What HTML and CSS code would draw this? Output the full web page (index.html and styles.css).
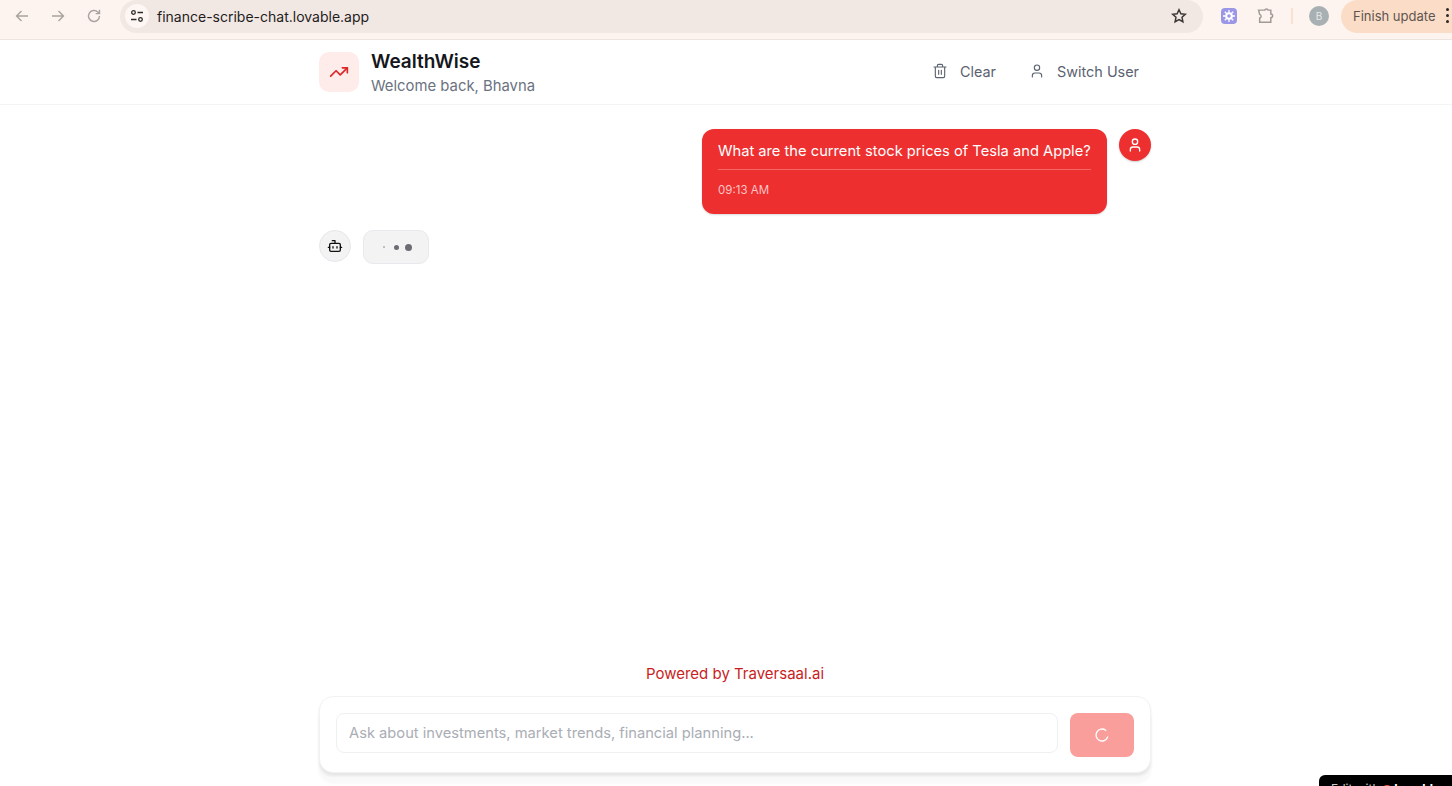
FILE: index.html
```html
<!DOCTYPE html>
<html lang="en">
<head>
<meta charset="utf-8">
<title>WealthWise</title>
<link rel="stylesheet" href="styles.css">
</head>
<body>
<div class="browser">
  <div class="nav-icons">
    <svg class="nav-icon" viewBox="0 0 16 16"><path d="M14 8H2.500M7.500 3 2.500 8l5 5"/></svg>
    <svg class="nav-icon" viewBox="0 0 16 16"><path d="M2 8h11.500M8.500 3l5 5-5 5"/></svg>
    <svg class="nav-icon" viewBox="0 0 16 16"><path d="M13.500 8a5.500 5.500 0 1 1-1.700-4L13.500 5.600M13.500 1.800v3.800H9.700"/></svg>
  </div>
  <div class="omnibox">
    <span class="site-chip">
      <svg viewBox="0 0 14 14" class="tune"><circle cx="3.500" cy="3.500" r="1.800"/><path d="M7.500 3.500H13M1 10.500h5.500"/><circle cx="10.500" cy="10.500" r="1.800"/></svg>
    </span>
    <span class="url">finance-scribe-chat.lovable.app</span>
    <svg class="star" viewBox="0 0 16 16"><path d="m8 1.800 1.900 4 4.400.5-3.300 3 .9 4.400L8 11.500l-3.900 2.200.9-4.400-3.300-3 4.400-.5z"/></svg>
  </div>
  <div class="ext-icons">
    <span class="ext-purple"><svg viewBox="0 0 16 16"><circle cx="8" cy="8" r="3.800" fill="#fff"/><path d="M8 2v12M2 8h12M3.800 3.800l8.400 8.400M12.200 3.800l-8.400 8.400" stroke="#fff" stroke-width="1.300"/><circle cx="8" cy="8" r="1.800" fill="#9b96e6"/></svg></span>
    <svg class="puzzle" viewBox="0 0 16 16"><path d="M1.500 2h5.800a1.700 1.700 0 0 1 3.200 0H13v3.700a1.700 1.700 0 0 1 0 3.400v4.400H2.500V9.500a1.800 1.800 0 0 0 0-3.500z"/></svg>
    <span class="divider"></span>
    <span class="profile">B</span>
  </div>
  <div class="update">Finish update</div>
  <span class="kebab"><i></i><i></i><i></i></span>
</div>

<div class="app">
  <header class="app-header">
    <div class="header-inner">
      <div class="brand">
        <span class="brand-icon">
          <svg viewBox="0 0 24 24"><path d="m22 7-8.500 8.500-5-5L2 17"/><path d="M16 7h6v6"/></svg>
        </span>
        <div class="brand-text">
          <h1>WealthWise</h1>
          <p>Welcome back, Bhavna</p>
        </div>
      </div>
      <div class="actions">
        <button class="action">
          <svg viewBox="0 0 24 24"><path d="M3 6h18M19 6v14a2 2 0 0 1-2 2H7a2 2 0 0 1-2-2V6M8 6V4a2 2 0 0 1 2-2h4a2 2 0 0 1 2 2v2M10 11v6M14 11v6"/></svg>
          Clear
        </button>
        <button class="action">
          <svg viewBox="0 0 24 24"><path d="M19 21v-2a4 4 0 0 0-4-4H9a4 4 0 0 0-4 4v2"/><circle cx="12" cy="7" r="4"/></svg>
          Switch User
        </button>
      </div>
    </div>
  </header>

  <main class="chat">
    <div class="msg-user">
      <div class="bubble">
        <p class="bubble-text">What are the current stock prices of Tesla and Apple?</p>
        <p class="bubble-time">09:13 AM</p>
      </div>
      <span class="avatar-user">
        <svg viewBox="0 0 24 24"><path d="M19 21v-2a4 4 0 0 0-4-4H9a4 4 0 0 0-4 4v2"/><circle cx="12" cy="7" r="4"/></svg>
      </span>
    </div>
    <div class="msg-bot">
      <span class="avatar-bot">
        <svg viewBox="0 0 24 24"><path d="M12 8V4H8"/><rect x="4" y="8" width="16" height="12" rx="2"/><path d="M2 14h2M20 14h2M15 13v2M9 13v2"/></svg>
      </span>
      <div class="typing"><i class="dot-a"></i><i class="dot-b"></i><i class="dot-c"></i></div>
    </div>
  </main>

  <footer class="composer-wrap">
    <p class="powered">Powered by Traversaal.ai</p>
    <div class="composer">
      <div class="input">Ask about investments, market trends, financial planning...</div>
      <button class="send">
        <svg viewBox="0 0 24 24"><path d="M21 12a9 9 0 1 1-6.200-8.600"/></svg>
      </button>
    </div>
  </footer>
</div>
<div class="badge">Edit with <span class="heart"></span> <b>Lovable</b></div>
</body>
</html>
```

FILE: styles.css
```css
* { box-sizing: border-box; }
html, body { margin: 0; height: 100%; overflow: hidden; }
body {
  width: 1452px;
  height: 786px;
  display: flex;
  flex-direction: column;
  background: #fff;
  font-family: "Inter", "Liberation Sans", sans-serif;
  color: #16181d;
  position: relative;
}
p, h1 { margin: 0; }
button { font: inherit; border: 0; background: none; padding: 0; }

/* Browser chrome */
.browser {
  height: 40px;
  flex: none;
  display: flex;
  align-items: center;
  background: #fdf4f0;
  border-bottom: 1px solid #ece4df;
  padding: 0 0 7px 14px;
}
.nav-icons { display: flex; gap: 20px; width: 106px; }
.nav-icon { width: 16px; height: 16px; fill: none; stroke: #a8a3a0; stroke-width: 1.400; }
.omnibox {
  width: 1083px;
  height: 33px;
  border-radius: 17px;
  background: #f1e7e3;
  display: flex;
  align-items: center;
  padding: 0 16px 0 5px;
}
.site-chip {
  width: 24px; height: 24px; border-radius: 50%;
  background: #fdf6f3;
  display: flex; align-items: center; justify-content: center;
}
.tune { width: 14px; height: 14px; fill: none; stroke: #2c2a29; stroke-width: 1.300; }
.url { margin-left: 8px; font-size: 14px; color: #1f1d1c; flex: 1; }
.star { width: 16px; height: 16px; fill: none; stroke: #3a3735; stroke-width: 1.500; }
.ext-icons { display: flex; align-items: center; margin-left: 18px; }
.ext-purple { width: 16px; height: 16px; border-radius: 4px; background: #9b96e6; display: block; }
.ext-purple svg { display: block; width: 16px; height: 16px; }
.puzzle { width: 17px; height: 17px; margin-left: 20px; fill: none; stroke: #a09a97; stroke-width: 1.400; }
.divider { width: 2px; height: 16px; background: #f8e2d3; margin-left: 17px; }
.profile {
  width: 20px; height: 20px; border-radius: 50%;
  background: #a9b0b3; color: #e6e9ea;
  font-size: 10px; display: flex; align-items: center; justify-content: center;
  margin-left: 16px;
}
.update {
  margin-left: 12px;
  width: 111px;
  height: 33px;
  flex: none;
  border-radius: 17px 0 0 17px;
  background: #fbdcc6;
  color: #5d5551;
  font-size: 13px;
  display: flex; align-items: center;
  padding-left: 12px;
  white-space: nowrap;
}
.kebab {
  position: absolute; left: 1446px; top: 8px;
  display: flex; flex-direction: column; gap: 3px;
}
.kebab i { width: 3px; height: 3px; border-radius: 50%; background: #2b2725; display: block; }

/* App: the page column sits 9px right of centre, as in the reference */
.app { flex: 1; min-height: 0; display: flex; flex-direction: column; padding-left: 18px; }
.app-header { height: 65px; flex: none; border-bottom: 1px solid #f3f4f6; margin-left: -18px; padding-left: 18px; }
.header-inner {
  width: 832px; height: 64px; margin: 0 auto;
  display: flex; align-items: center; justify-content: space-between;
  padding-right: 12px;
}
.brand { display: flex; align-items: center; gap: 12px; }
.brand-icon {
  width: 40px; height: 40px; border-radius: 10px;
  background: #fdecea;
  display: flex; align-items: center; justify-content: center;
}
.brand-icon svg { width: 20px; height: 20px; fill: none; stroke: #dc2626; stroke-width: 2; stroke-linecap: round; stroke-linejoin: round; }
.brand-text { display: flex; flex-direction: column; padding-top: 3px; }
.brand-text h1 { font-size: 19px; font-weight: 600; line-height: 24px; color: #15171c; }
.brand-text p { font-size: 14.850px; line-height: 24px; color: #6b7280; }
.actions { display: flex; gap: 33px; transform: translateY(-1px); }
.action { display: flex; align-items: center; gap: 12px; font-size: 14.400px; color: #5b6270; }
.action svg { width: 16px; height: 16px; fill: none; stroke: #5b6270; stroke-width: 1.700; stroke-linecap: round; stroke-linejoin: round; }

.chat { flex: 1; min-height: 0; width: 832px; margin: 0 auto; padding-top: 24px; display: flex; flex-direction: column; gap: 16px; }
.msg-user { display: flex; justify-content: flex-end; gap: 12px; align-items: flex-start; }
.bubble {
  width: 405px; height: 85px;
  border-radius: 12px;
  background: #ee2f2f;
  color: #fff;
  padding: 12px 16px 0;
  box-shadow: 0 1px 2px rgba(0,0,0,.15);
}
.bubble-text {
  font-size: 14.700px; line-height: 20px;
  padding-bottom: 8px;
  border-bottom: 1px solid #f76666;
  white-space: nowrap;
}
.bubble-time { font-size: 11.500px; line-height: 16px; margin-top: 12px; color: #fbc4c4; }
.avatar-user {
  width: 32px; height: 32px; border-radius: 50%;
  background: #ee2f2f;
  display: flex; align-items: center; justify-content: center;
  box-shadow: 0 1px 2px rgba(0,0,0,.2);
}
.avatar-user svg { width: 16px; height: 16px; fill: none; stroke: #fff; stroke-width: 2; stroke-linecap: round; stroke-linejoin: round; }
.msg-bot { display: flex; gap: 12px; align-items: flex-start; }
.avatar-bot {
  width: 32px; height: 32px; border-radius: 50%;
  background: #f3f3f4; border: 1px solid #e5e7eb;
  display: flex; align-items: center; justify-content: center;
}
.avatar-bot svg { width: 16px; height: 16px; fill: none; stroke: #111; stroke-width: 2; stroke-linecap: round; stroke-linejoin: round; }
.typing {
  width: 66px; height: 34px; border-radius: 10px;
  background: #f3f3f4; border: 1px solid #e8e9ec;
  display: flex; align-items: center; justify-content: center; gap: 6px;
  padding-left: 2px;
}
.typing i { display: block; border-radius: 50%; background: #6b6d73; }
.dot-a { width: 2px; height: 2px; opacity: .5; margin-right: 3px; }
.dot-b { width: 5px; height: 5px; }
.dot-c { width: 7px; height: 7px; }

.composer-wrap { width: 832px; margin: 0 auto; flex: none; padding-bottom: 13px; }
.powered { text-align: center; font-size: 15px; line-height: 20px; color: #c81e1e; margin-bottom: 12px; }
.composer {
  height: 77px;
  border-radius: 14px;
  border: 1px solid #f1f2f4;
  background: #fff;
  box-shadow: 0 3px 3px rgba(0,0,0,.08), 0 10px 2px 1px rgba(0,0,0,.025);
  padding: 16px 16px 0;
  display: flex; gap: 12px; align-items: flex-start;
}
.input {
  flex: 1; height: 40px;
  border: 1px solid #eff0f2; border-radius: 8px;
  padding: 0 12px;
  display: flex; align-items: center;
  font-size: 14.700px; color: #a9adb4;
}
.send {
  width: 64px; height: 44px; border-radius: 8px;
  background: #f99e9b;
  display: flex; align-items: center; justify-content: center;
}
.send svg { width: 16px; height: 16px; fill: none; stroke: #fff; stroke-width: 2; stroke-linecap: round; transform: rotate(20deg); }

.badge {
  position: absolute; left: 1319px; top: 775px;
  width: 140px; height: 30px;
  background: #000; color: #ccc;
  border-radius: 6px 0 0 0;
  font-size: 12px;
  padding: 6px 12px;
  white-space: nowrap;
}
.badge b { color: #fff; }
.heart { display: inline-block; width: 8px; height: 8px; border-radius: 50%; background: #f0503c; }
```
